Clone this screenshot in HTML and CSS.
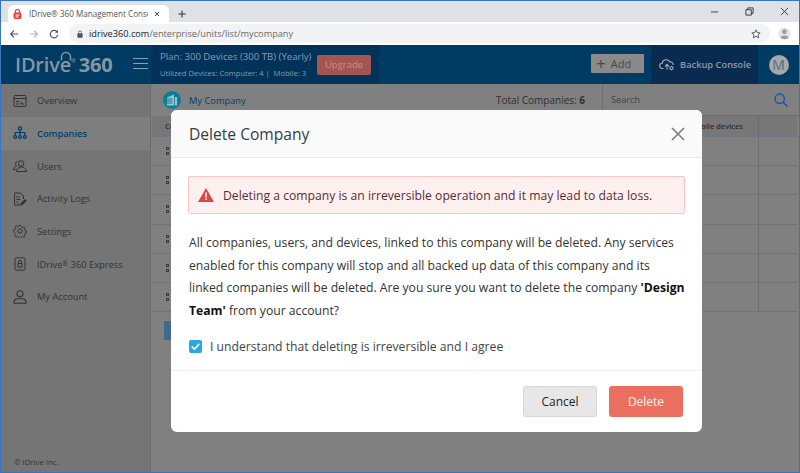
FILE: index.html
```html
<!DOCTYPE html>
<html lang="en">
<head>
<meta charset="utf-8">
<title>IDrive 360 Management Console</title>
<link rel="stylesheet" href="styles.css">
</head>
<body>
<div class="window">
  <div class="tabstrip">
    <div class="tab">
      <svg class="tab-icon" viewBox="0 0 9 10"><rect x=".5" y="3.500" width="8" height="6.500" rx="2" fill="#e53d3d"/><path d="M2.200 4V2.800a2.300 2.300 0 0 1 4.600 0V4" fill="none" stroke="#e53d3d" stroke-width="1.200"/><path d="M2.500 6h4M2.500 8h3" stroke="#fff" stroke-width="1"/></svg>
      <span class="tab-title">IDrive® 360 Management Conso</span>
      <svg class="tab-close" viewBox="0 0 10 10"><path d="M1.500 1.500l7 7M8.500 1.500l-7 7" stroke="#333" stroke-width="1.500"/></svg>
    </div>
    <svg class="newtab" viewBox="0 0 10 10"><path d="M5 .5v9M.5 5h9" stroke="#333" stroke-width="1.300"/></svg>
    <div class="winctl">
      <svg viewBox="0 0 10 10"><path d="M1 5.500h8" stroke="#333" stroke-width="1"/></svg>
      <svg viewBox="0 0 10 10"><path d="M1 3h6v6H1zM3 3V1h6v6H7" fill="none" stroke="#333" stroke-width="1"/></svg>
      <svg viewBox="0 0 10 10"><path d="M1 1l8 8M9 1l-8 8" stroke="#333" stroke-width="1"/></svg>
    </div>
  </div>
  <div class="toolbar">
    <svg class="nav" viewBox="0 0 12 12"><path d="M11 6H2M6 2 2 6l4 4" fill="none" stroke="#555" stroke-width="1.400"/></svg>
    <svg class="nav" viewBox="0 0 12 12"><path d="M1 6h9M6 2l4 4-4 4" fill="none" stroke="#b4b4b4" stroke-width="1.400"/></svg>
    <svg class="nav" viewBox="0 0 12 12"><path d="M10 4a4.500 4.500 0 1 0 .5 3" fill="none" stroke="#555" stroke-width="1.400"/><path d="M10.800 1v3.500H7.300z" fill="#555"/></svg>
    <div class="omnibox">
      <svg class="lock" viewBox="0 0 8 10"><rect x=".5" y="4" width="7" height="6" rx="1" fill="#555"/><path d="M2 4.500V3a2 2 0 0 1 4 0v1.500" fill="none" stroke="#555"/></svg>
      <span class="url"><span class="host">idrive360.com</span>/enterprise/units/list/mycompany</span>
      <svg class="star" viewBox="0 0 12 12"><path d="M6 1l1.500 3.300 3.500.4-2.600 2.400.7 3.500L6 8.800l-3.100 1.800.7-3.500L1 4.700l3.500-.4z" fill="none" stroke="#444"/></svg>
    </div>
    <svg class="profile" viewBox="0 0 14 14"><circle cx="7" cy="7" r="6.500" fill="#e3e5e8"/><circle cx="7" cy="5" r="2.500" fill="#9b9da1"/><path d="M2.500 11.500c1-3 8-3 9 0a6.500 6.500 0 0 1-9 0z" fill="#9b9da1"/></svg>
  </div>

  <header class="appbar">
    <div class="brand">
      <span class="logo">IDriv<span class="logo-e">e<svg viewBox="0 0 14 11"><path d="M2.500 10.500V7a4.500 4.500 0 0 1 9 0v3.500" fill="none" stroke="#8896a2" stroke-width="1.500"/></svg></span><sup>®</sup> <span class="logo-num">360</span></span>
      <span class="burger"><i></i><i></i><i></i></span>
    </div>
    <div class="plan">
      <div class="plan-info">
        <div class="plan-name">Plan: 300 Devices (300 TB) (Yearly)</div>
        <div class="plan-use">Utilized Devices: Computer: 4 |&nbsp; Mobile: 3</div>
      </div>
      <div class="upgrade">Upgrade</div>
    </div>
    <div class="bar-right">
      <div class="add"><span class="plus">+</span> Add</div>
      <div class="console">
        <svg viewBox="0 0 18 14"><path d="M5 11.500H4a3 3 0 0 1-.4-6A4.500 4.500 0 0 1 12 4a3.500 3.500 0 0 1 4 3.500M9 12.500V7M6.800 9 9 6.800 11.200 9" fill="none" stroke="#a8b4c0" stroke-width="1.200"/><circle cx="14" cy="11" r="1.800" fill="none" stroke="#a8b4c0" stroke-width="1.200"/></svg>
        <span>Backup Console</span>
      </div>
      <div class="avatar-wrap"><div class="avatar">M</div></div>
    </div>
  </header>

  <div class="content">
    <aside class="sidebar">
      <nav class="menu">
        <a class="item"><svg viewBox="0 0 14 14"><g fill="none" stroke="#333" stroke-width="1"><rect x="1" y="1.500" width="12" height="11" rx="1"/><path d="M1 4.500h12M3 7.500h3M3 10h3M8 8v2h3"/></g></svg><span>Overview</span></a>
        <a class="item active"><svg viewBox="0 0 14 14"><g fill="none" stroke="#003e6b" stroke-width="1.200"><rect x="5.500" y=".8" width="3" height="3" rx="1"/><path d="M7 4v5M2.200 9V6.500h9.600V9"/><circle cx="2.200" cy="11" r="1.400"/><circle cx="7" cy="11" r="1.400"/><circle cx="11.800" cy="11" r="1.400"/></g></svg><span>Companies</span></a>
        <a class="item"><svg viewBox="0 0 14 14"><g fill="none" stroke="#333" stroke-width="1"><circle cx="8" cy="4.500" r="2.800"/><path d="M3.500 12.500c0-6 9.500-6 10 0zM4.500 2.500a2.500 2.500 0 0 0-1 4.500C1.500 8 .8 9 .5 10.500h2"/></g></svg><span>Users</span></a>
        <a class="item"><svg viewBox="0 0 14 14"><g fill="none" stroke="#333" stroke-width="1"><path d="M8 13H1.500V1h6l3 3v3M3.500 5h3M3.500 7.500h4M3.500 10h2"/><path d="M8 11.500l4-4 1.300 1.300-4 4H8z" fill="#333"/></g></svg><span>Activity Logs</span></a>
        <a class="item"><svg viewBox="0 0 14 14"><g fill="none" stroke="#333" stroke-width="1"><circle cx="7" cy="7" r="2.200"/><path d="M6 .8h2l.4 1.800 1.400.6 1.600-1 1.400 1.400-1 1.600.6 1.400 1.800.4v2l-1.800.4-.6 1.400 1 1.600-1.400 1.400-1.600-1-1.400.6-.4 1.800H6l-.4-1.800-1.400-.6-1.600 1-1.400-1.400 1-1.600-.6-1.400L-.2 8V6l1.800-.4.6-1.400-1-1.600L2.800 1.200l1.600 1 1.400-.6z" transform="translate(.6 .6) scale(.92)"/></g></svg><span>Settings</span></a>
        <a class="item"><svg viewBox="0 0 14 14"><g fill="none" stroke="#333" stroke-width="1"><rect x="2" y=".8" width="10" height="12.400" rx="1.500"/><rect x="5" y="6.500" width="4" height="3.500"/><path d="M5.500 6.500V5a1.500 1.500 0 0 1 3 0v1.500"/></g></svg><span>IDrive<sup>®</sup> 360 Express</span></a>
        <a class="item"><svg viewBox="0 0 14 14"><g fill="none" stroke="#333" stroke-width="1.100"><circle cx="7" cy="3.800" r="3"/><path d="M1 13.300c0-2.500 1-4.500 3.500-4.500h5c2.500 0 3.500 2 3.500 4.500z"/></g></svg><span>My Account</span></a>
      </nav>
      <div class="copy">© IDrive Inc.</div>
    </aside>

    <main class="main">
      <div class="topline">
        <span class="co-icon"><svg viewBox="0 0 18 18"><circle cx="9" cy="9" r="9" fill="#0d7d97"/><path d="M4 6.500 11 3.500V14.500H4zM11.800 6H14v8.500h-2.200z" fill="#9cc2cd"/><path d="M4 8h5.500M4 10h5.500M4 12h5.500" stroke="#0d7d97"/></svg></span>
        <span class="co-name">My Company</span>
        <span class="total">Total Companies: <b>6</b></span>
        <div class="search"><span>Search</span>
          <svg viewBox="0 0 14 14"><circle cx="5.700" cy="5.700" r="4.700" fill="none" stroke="#1c4fa8" stroke-width="1.400"/><path d="M9.200 9.200l4.300 4.300" stroke="#1c4fa8" stroke-width="1.500"/></svg>
        </div>
      </div>
      <div class="table">
        <div class="thead"><span class="th-first">Co</span><span class="th-mobile">Mobile devices</span><span class="th-last"></span></div>
        <div class="row"><span class="grip"><i></i><i></i><i></i><i></i></span><span class="cell-last"></span></div>
        <div class="row"><span class="grip"><i></i><i></i><i></i><i></i></span><span class="cell-last"></span></div>
        <div class="row"><span class="grip"><i></i><i></i><i></i><i></i></span><span class="cell-last"></span></div>
        <div class="row"><span class="grip"><i></i><i></i><i></i><i></i></span><span class="cell-last"></span></div>
        <div class="row"><span class="grip"><i></i><i></i><i></i><i></i></span><span class="cell-last"></span></div>
        <div class="row"><span class="grip"><i></i><i></i><i></i><i></i></span><span class="cell-last"></span></div>
      </div>
      <div class="pager"></div>
    </main>
  </div>

  <section class="modal">
    <div class="modal-head">
      <h2>Delete Company</h2>
      <svg class="modal-x" viewBox="0 0 14 14"><path d="M1 1l12 12M13 1 1 13" stroke="#808080" stroke-width="1.700"/></svg>
    </div>
    <div class="modal-body">
      <div class="alert">
        <svg viewBox="0 0 16 14"><path d="M8 0 16 14H0z" fill="#d9474b"/><path d="M8 4.500v5M8 10.500v1.600" stroke="#fff" stroke-width="1.500"/></svg>
        <span>Deleting a company is an irreversible operation and it may lead to data loss.</span>
      </div>
      <p class="msg">All companies, users, and devices, linked to this company will be deleted. Any services enabled for this company will stop and all backed up data of this company and its linked companies will be deleted. Are you sure you want to delete the company <b>'Design Team'</b> from your account?</p>
      <label class="agree">
        <span class="check"><svg viewBox="0 0 12 12"><path d="M2.500 6.200 5 8.500l4.500-5" fill="none" stroke="#fff" stroke-width="1.500"/></svg></span>
        <span>I understand that deleting is irreversible and I agree</span>
      </label>
    </div>
    <div class="modal-foot">
      <div class="btn cancel">Cancel</div>
      <div class="btn delete">Delete</div>
    </div>
  </section>
</div>
</body>
</html>
```
FILE: styles.css
```css
* { box-sizing: border-box; }
html, body { margin: 0; height: 100%; }
body { font-family: "Open Sans", "Noto Sans", sans-serif; overflow: hidden; }

.window {
  position: relative;
  width: 800px;
  height: 473px;
  border: 1px solid #3a74bd;
  display: flex;
  flex-direction: column;
  background: #fff;
  overflow: hidden;
}

/* browser chrome */
.tabstrip {
  height: 21px;
  flex: none;
  background: #dee1e6;
  display: flex;
  align-items: flex-end;
  padding-left: 7px;
}
.tab {
  width: 161px;
  height: 17px;
  background: #fff;
  border-radius: 6px 6px 0 0;
  display: flex;
  align-items: center;
  padding: 0 5px;
}
.tab-icon { width: 9px; height: 10px; flex: none; }
.tab-title {
  font-family: "Open Sans", sans-serif;
  font-size: 8.100px;
  color: #555;
  margin-left: 7px;
  width: 119px;
  white-space: nowrap;
  overflow: hidden;
}
.tab-close { width: 6px; height: 6px; margin-left: 6px; flex: none; }
.newtab { width: 8px; height: 8px; margin: 0 0 4px 9px; flex: none; }
.winctl { margin-left: auto; height: 100%; display: flex; align-items: center; gap: 26px; padding-right: 10px; }
.winctl svg { width: 9px; height: 9px; }

.toolbar {
  height: 23px;
  flex: none;
  display: flex;
  align-items: center;
  background: #fff;
  padding-left: 8px;
  gap: 10px;
}
.nav { width: 10px; height: 10px; flex: none; }
.omnibox {
  width: 701px;
  flex: none;
  height: 19px;
  border-radius: 10px;
  background: #f1f3f4;
  display: flex;
  align-items: center;
  padding: 0 9px 0 8px;
}
.lock { width: 6px; height: 8px; margin-right: 6px; flex: none; }
.url { font-family: "Open Sans", sans-serif; font-size: 9.200px; color: #6a6a6a; white-space: nowrap; }
.host { color: #222; }
.star { width: 10px; height: 10px; margin-left: auto; flex: none; }
.profile { width: 13px; height: 13px; flex: none; margin-left: -2px; }

/* app bar */
.appbar {
  height: 39px;
  flex: none;
  background: #003b63;
  display: flex;
  align-items: stretch;
  color: #a9b4bd;
}
.brand { width: 150px; flex: none; display: flex; align-items: center; padding-left: 14px; position: relative; }
.logo { font-size: 20px; font-weight: 600; color: #8896a2; white-space: nowrap; letter-spacing: -.2px; }
.logo-e { position: relative; display: inline-block; }
.logo-e svg { position: absolute; left: -1px; top: -1px; width: 14px; height: 11px; }
.logo sup { font-size: 6px; vertical-align: 9px; line-height: 0; }
.logo-num { font-weight: 700; margin-left: -2px; }
.burger { position: absolute; left: 132px; top: 13px; width: 15px; display: flex; flex-direction: column; gap: 4px; }
.burger i { display: block; height: 1px; background: #8aa0b0; }
.plan {
  width: 228px;
  flex: none;
  background: #00325a;
  display: flex;
  align-items: center;
  padding-left: 9px;
  gap: 7px;
}
.plan-info { width: 150px; flex: none; }
.plan-name { font-size: 9.600px; line-height: 14px; color: #8a9aa8; white-space: nowrap; }
.plan-use { font-size: 7.600px; line-height: 12px; margin-top: 3px; color: #8a9aa8; white-space: nowrap; }
.upgrade {
  width: 54px;
  height: 20px;
  background: #a5544f;
  border-radius: 2px;
  font-size: 9.500px;
  color: #c98f8b;
  display: flex;
  align-items: center;
  justify-content: center;
}
.bar-right { flex: 1; display: flex; align-items: stretch; justify-content: flex-end; }
.add {
  align-self: center;
  width: 53px;
  height: 19px;
  margin-top: -2px;
  background: #8a8a8a;
  border-radius: 1px;
  font-size: 11px;
  color: #484848;
  display: flex;
  align-items: center;
  padding-left: 5px;
  gap: 5px;
}
.plus { font-size: 17px; line-height: 1; }
.console {
  width: 107px;
  margin-left: 7px;
  background: #0a2b50;
  display: flex;
  align-items: center;
  padding-left: 8px;
  gap: 5px;
  font-size: 9.300px;
  font-weight: 600;
  color: #8d9aa8;
  white-space: nowrap;
}
.console svg { width: 16px; height: 13px; flex: none; }
.avatar-wrap { width: 41px; display: flex; align-items: center; justify-content: center; }
.avatar {
  width: 20px;
  height: 20px;
  border-radius: 50%;
  background: #a8a8a8;
  color: #4c6f87;
  font-size: 14px;
  display: flex;
  align-items: center;
  justify-content: center;
}

/* layout under bar */
.content { flex: 1; display: flex; min-height: 0; }
.sidebar {
  width: 150px;
  flex: none;
  background: #757575;
  border-right: 1px solid #6c6c6c;
  display: flex;
  flex-direction: column;
  justify-content: space-between;
}
.menu { display: flex; flex-direction: column; }
.item {
  height: 32.700px;
  display: flex;
  align-items: center;
  padding-left: 12px;
  gap: 10px;
  font-size: 9.300px;
  color: #333;
  white-space: nowrap;
}
.item:first-child { height: 33px; }
.item svg { width: 14px; height: 14px; flex: none; }
.item sup { font-size: 7px; line-height: 0; vertical-align: 2px; }
.item.active { background: #7e7e7e; color: #003e6b; font-weight: 600; }
.copy { font-size: 7.800px; color: #333; padding: 0 0 5px 13px; }

.main { flex: 1; background: #808080; display: flex; flex-direction: column; padding-left: 1px; }
.topline {
  height: 32px;
  flex: none;
  display: flex;
  align-items: center;
  padding-left: 11px;
  font-size: 10px;
  color: #333;
}
.co-icon { width: 18px; height: 18px; flex: none; }
.co-icon svg { display: block; width: 18px; height: 18px; }
.co-name { margin-left: 8px; color: #003e6b; font-size: 9.300px; }
.total { margin-left: auto; font-size: 10px; color: #2f2f2f; }
.search {
  width: 197px;
  margin-left: 17px;
  height: 100%;
  border-left: 1px solid #6f6f6f;
  border-bottom: 1px solid #6f6f6f;
  display: flex;
  align-items: center;
  justify-content: space-between;
  padding: 0 11px 0 8px;
  color: #444;
  font-size: 9.200px;
}
.search svg { width: 14px; height: 14px; }

.table { display: flex; flex-direction: column; margin-right: 2px; }
.thead {
  height: 21px;
  background: #777;
  display: flex;
  align-items: center;
  border-bottom: 1px solid #6b7a85;
  font-size: 7.500px;
  font-weight: 600;
  color: #2e2e2e;
}
.th-first { margin-left: 13px; }
.th-mobile { margin-left: auto; margin-right: 15px; white-space: nowrap; }
.th-last { width: 39px; align-self: stretch; border-left: 1px solid #6b6b6b; }
.row {
  height: 29.200px;
  display: flex;
  align-items: center;
  justify-content: space-between;
  border-bottom: 1px solid #737373;
}
.grip { margin-left: 14px; width: 8px; display: grid; grid-template-columns: 3px 3px; gap: 2px; }
.grip i { width: 3px; height: 3px; border: 1px solid #3a3a3a; }
.cell-last { width: 39px; align-self: stretch; border-left: 1px solid #6f6f6f; }
.pager { width: 20px; height: 19px; margin: 9px 0 0 12px; background: #3f6a8b; }

/* modal */
.modal {
  position: absolute;
  left: 170px;
  top: 109px;
  width: 531px;
  height: 322px;
  background: #fff;
  border-radius: 6px;
  display: flex;
  flex-direction: column;
  overflow: hidden;
}
.modal-head {
  height: 48px;
  flex: none;
  background: #fafafa;
  border-bottom: 1px solid #e8e8e8;
  display: flex;
  align-items: center;
  justify-content: space-between;
  padding: 0 17px 0 18px;
}
.modal-head h2 { margin: 0; font-size: 15.600px; font-weight: 400; color: #333c47; }
.modal-x { width: 14px; height: 14px; }
.modal-body { flex: 1; padding: 18px 17px 0 17px; }
.alert {
  height: 38px;
  background: #fff0f0;
  border: 1px solid #fbc6c6;
  border-radius: 2px;
  display: flex;
  align-items: center;
  padding-left: 9px;
  gap: 9px;
  font-size: 12.180px;
  color: #5c2b30;
  white-space: nowrap;
}
.alert svg { width: 16px; height: 14px; flex: none; }
.msg {
  margin: 18px 0 0 0;
  padding-left: 1px;
  font-size: 12.180px;
  line-height: 22.600px;
  color: #333;
}
.msg b { color: #111; }
.agree {
  margin: 12px 0 0 1px;
  display: flex;
  align-items: center;
  gap: 8px;
  height: 24px;
  font-size: 12.180px;
  color: #444;
  white-space: nowrap;
}
.check { width: 13px; height: 13px; background: #29a9e0; border-radius: 2px; display: block; }
.check svg { display: block; width: 13px; height: 13px; }
.modal-foot {
  height: 62px;
  flex: none;
  border-top: 1px solid #f0f0f0;
  display: flex;
  justify-content: flex-end;
  align-items: flex-start;
  padding: 15px 19px 0 0;
  gap: 12px;
}
.btn {
  width: 74px;
  height: 31px;
  border-radius: 3px;
  font-size: 12px;
  display: flex;
  align-items: center;
  justify-content: center;
}
.cancel { background: #e7e7e7; border: 1px solid #d6d6d6; color: #222; }
.delete { background: #ea6f60; color: #fff3f0; }
```
